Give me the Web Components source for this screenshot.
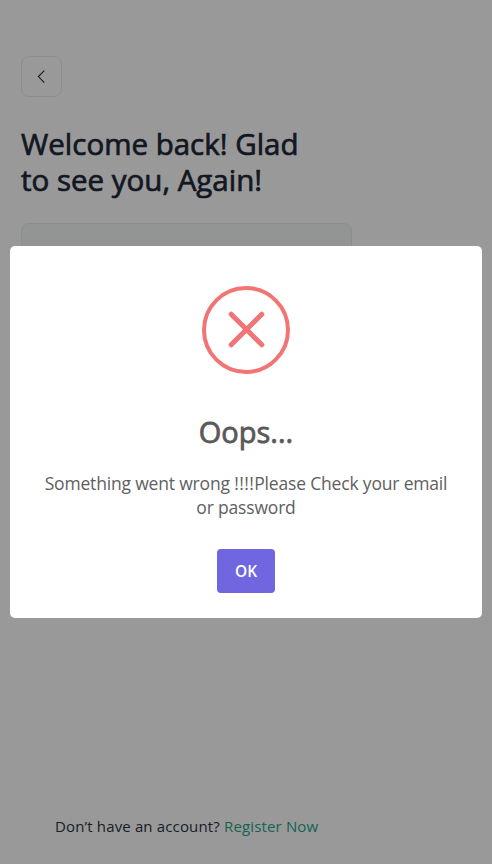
<!DOCTYPE html>
<html lang="en">
<head>
<meta charset="utf-8">
<title>Login</title>
<style>
html,body{margin:0;height:100%;overflow:hidden;background:#fff;font-family:"Open Sans","Noto Sans",sans-serif}
</style>
</head>
<body>
<login-page></login-page>
<alert-dialog>
  <span slot="title">Oops...</span>
  <span slot="text">Something went wrong <span style="letter-spacing:.4px">!!!!</span>Please Check your email<br>or password</span>
  <span slot="action">OK</span>
</alert-dialog>
<script>
const define = (name, html) => customElements.define(name, class extends HTMLElement {
  constructor() {
    super();
    this.attachShadow({ mode: 'open' }).innerHTML = html;
  }
});

define('back-button', `
<style>
:host{display:block}
button{display:flex;align-items:center;justify-content:center;box-sizing:border-box;width:41px;height:41px;padding:0;border:1px solid #e8ecf4;border-radius:8px;background:#fff}
svg{display:block}
</style>
<button aria-label="Back"><svg width="19" height="19" viewBox="0 0 19 19" fill="none" stroke="#1f2937" stroke-width="1.1"><path d="M12.3 3.7 6.4 9.6l5.9 6"/></svg></button>`);

define('text-field', `
<style>
:host{display:block;box-sizing:border-box;height:56px;border:1px solid #e8ecf4;border-radius:8px;background:#f3f8f7}
</style>`);

define('register-prompt', `
<style>
:host{display:block;font-size:15px;line-height:24px;color:#2b3442;white-space:nowrap;letter-spacing:.15px}
a{color:#22a68b;text-decoration:none}
</style>
<slot></slot> <a><slot name="link"></slot></a>`);

define('login-page', `
<style>
:host{display:flex;flex-direction:column;box-sizing:border-box;height:864px;padding:56px 21px 26px}
h1{margin:29px 0 25px;font-size:29.5px;line-height:36px;font-weight:400;-webkit-text-stroke:.7px #1f2937;color:#1f2937;white-space:nowrap}
text-field{width:331px}
register-prompt{margin:auto 0 0 34px}
</style>
<back-button></back-button>
<h1><span>Welcome back! Glad</span><br><span>to see you, Again!</span></h1>
<text-field></text-field>
<register-prompt>Don’t have an account?<span slot="link">Register Now</span></register-prompt>`);

define('error-icon', `
<style>:host{display:block;width:88px;height:88px}svg{display:block}</style>
<svg width="88" height="88" viewBox="0 0 88 88" fill="none" stroke="#f27474"><circle cx="44" cy="44" r="42" stroke-width="4"/><path d="m29.2 28.2 30.6 30.6M59.8 28.2 29.2 58.8" stroke-width="5" stroke-linecap="round"/></svg>`);

define('alert-dialog', `
<style>
:host{position:fixed;inset:0;display:flex;align-items:center;justify-content:center;background:rgba(0,0,0,.4)}
section{display:flex;flex-direction:column;align-items:center;box-sizing:border-box;width:472px;height:372px;padding-top:40px;border-radius:5px;background:#fff;color:#606060}
h2{margin:36px 0 0;font-size:29px;line-height:44px;font-weight:400;-webkit-text-stroke:.8px #595959;color:#595959}
p{margin:17px 0 0;font-size:17.5px;line-height:24px;letter-spacing:-.18px;text-align:center;white-space:nowrap}
button{margin:30px 0 0;width:58px;height:44px;padding:0;border:0;border-radius:4px;background:#7066e0;color:#fff;font:600 15.5px/44px "Open Sans","Noto Sans",sans-serif}
</style>
<section role="dialog" aria-modal="true">
<error-icon></error-icon>
<h2><slot name="title"></slot></h2>
<p><slot name="text"></slot></p>
<button><slot name="action"></slot></button>
</section>`);
</script>
</body>
</html>
